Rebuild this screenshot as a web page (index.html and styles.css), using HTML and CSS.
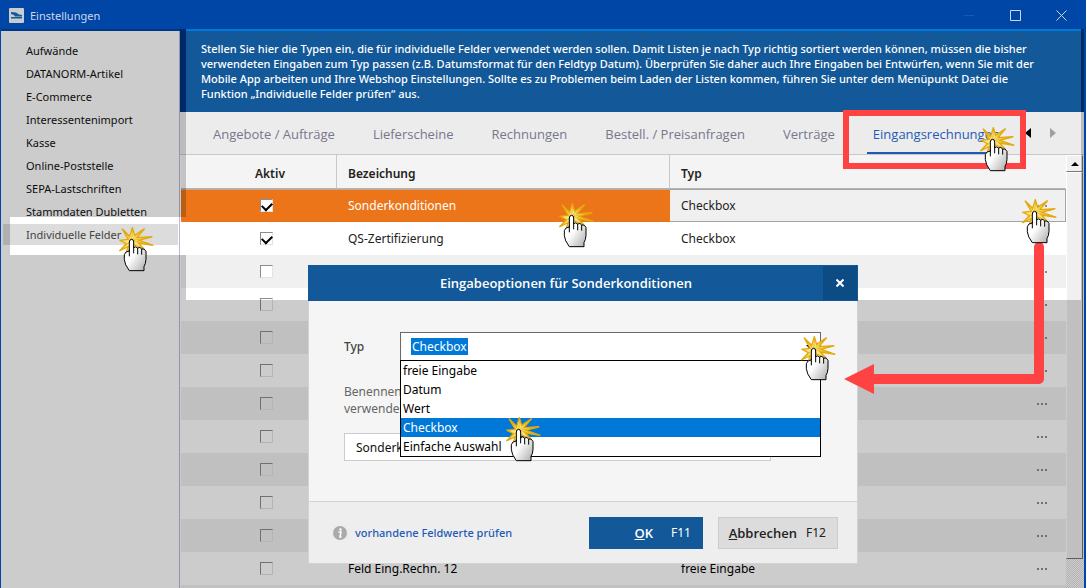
FILE: index.html
```html
<!DOCTYPE html>
<html lang="de">
<head>
<meta charset="utf-8">
<title>Einstellungen</title>
<link rel="stylesheet" href="styles.css">
</head>
<body>
<svg class="defs" aria-hidden="true">
  <defs>
    <linearGradient id="palm" x1="0" y1="0" x2="1" y2="1">
      <stop offset=".45" stop-color="#fff"/><stop offset="1" stop-color="#aaa"/>
    </linearGradient>
    <symbol id="click" viewBox="0 0 108 135">
      <path d="M9 5 L32 28 L40 2 L47 25 L77 5 L54 32 L100 29 L60 40 L103 55 L58 48 L75 66 L46 54 L20 84 L27 59 L1 72 L22 50 L3 40 L28 37 Z" fill="#f9e27c" stroke="#e3a90a" stroke-width="4"/>
      <path d="M38 40 L12 8 M38 40 L41 5 M38 40 L74 8 M38 40 L98 31 M38 40 L101 54 M38 40 L4 70" stroke="#e3a90a" stroke-width="2" fill="none"/>
      <path d="M31 72 V45 Q31 37 38 37 Q44 37 44 45 V62 Q50 57 56 63 Q63 58 68 66 Q76 63 81 73 V97 Q80 112 75 118 V131 H31 Q17 113 16 98 V83 Q18 73 31 72 Z" fill="url(#palm)" stroke="#000" stroke-width="3" stroke-linejoin="round"/>
      <path d="M31 68 V88 M44 58 V79 M56 63 V82 M68 66 V83" stroke="#000" stroke-width="3" fill="none"/>
    </symbol>
    <symbol id="dots" viewBox="0 0 11 2">
      <path d="M0 0h2v2H0zM4 0h2v2H4zM8 0h2v2H8z" fill="#8c8c8c"/>
    </symbol>
  </defs>
</svg>
<div class="window">
  <header class="titlebar">
    <svg class="app-icon" viewBox="0 0 15 15"><rect width="15" height="15" rx="1" fill="#c9cdd2"/><path d="M2 4L7 4.500L10 6.500L13 7V8.500H6L5 7L2 6Z" fill="#135898"/><path d="M2 9H13V10.500H2Z" fill="#135898"/></svg>
    <h1 class="app-title">Einstellungen</h1>
    <div class="window-buttons">
      <button class="window-button" aria-label="Minimieren"><svg viewBox="0 0 11 11"><path d="M0 5.500H10" stroke="#0e5fb0"/></svg></button>
      <button class="window-button" aria-label="Maximieren"><svg viewBox="0 0 11 11"><path d="M.5.5h10v10H.5z" fill="none" stroke="#ccd8ea"/></svg></button>
      <button class="window-button" aria-label="Schließen"><svg viewBox="0 0 11 11"><path d="M.5.500l10 10M10.500.500l-10 10" stroke="#ccd8ea"/></svg></button>
    </div>
  </header>
  <div class="content">
    <nav class="sidebar">
      <a class="nav-item" href="#">Aufwände</a>
      <a class="nav-item" href="#">DATANORM-Artikel</a>
      <a class="nav-item" href="#">E-Commerce</a>
      <a class="nav-item" href="#">Interessentenimport</a>
      <a class="nav-item" href="#">Kasse</a>
      <a class="nav-item" href="#">Online-Poststelle</a>
      <a class="nav-item" href="#">SEPA-Lastschriften</a>
      <a class="nav-item" href="#">Stammdaten Dubletten</a>
      <a class="nav-item nav-current" href="#">Individuelle Felder</a>
    </nav>
    <main class="main">
      <p class="banner">Stellen Sie hier die Typen ein, die für individuelle Felder verwendet werden sollen. Damit Listen je nach Typ richtig sortiert werden können, müssen die bisher<br>verwendeten Eingaben zum Typ passen (z.B. Datumsformat für den Feldtyp Datum). Überprüfen Sie daher auch Ihre Eingaben bei Entwürfen, wenn Sie mit der<br>Mobile App arbeiten und Ihre Webshop Einstellungen. Sollte es zu Problemen beim Laden der Listen kommen, führen Sie unter dem Menüpunkt Datei die<br>Funktion „Individuelle Felder prüfen“ aus.</p>
      <div class="tabs">
        <button class="tab">Angebote / Aufträge</button>
        <button class="tab">Lieferscheine</button>
        <button class="tab">Rechnungen</button>
        <button class="tab">Bestell. / Preisanfragen</button>
        <button class="tab">Verträge</button>
        <button class="tab tab-active">Eingangsrechnungen</button>
        <div class="tab-scroll">
          <button class="tab-arrow" aria-label="Zurück"><svg viewBox="0 0 6 10"><path d="M6 0V10L0 5Z" fill="#000"/></svg></button>
          <button class="tab-arrow" aria-label="Weiter"><svg viewBox="0 0 6 10"><path d="M0 0V10L6 5Z" fill="#a0a0a0"/></svg></button>
        </div>
      </div>
      <div class="grid-area">
        <table class="grid">
          <colgroup><col class="col-active"><col class="col-name"><col></colgroup>
          <thead><tr><th class="cell-active">Aktiv</th><th>Bezeichung</th><th>Typ</th></tr></thead>
          <tbody>
            <tr class="selected"><td class="cell-active"><input type="checkbox" checked aria-label="Aktiv"></td><td>Sonderkonditionen</td><td class="cell-type"><div class="type-box">Checkbox<button class="more" aria-label="Optionen"><svg><use href="#dots"/></svg></button></div></td></tr>
            <tr><td class="cell-active"><input type="checkbox" checked aria-label="Aktiv"></td><td>QS-Zertifizierung</td><td class="cell-type"><div class="type-box">Checkbox</div></td></tr>
            <tr><td class="cell-active"><input type="checkbox" aria-label="Aktiv"></td><td></td><td class="cell-type"><div class="type-box"><button class="more" aria-label="Optionen"><svg><use href="#dots"/></svg></button></div></td></tr>
            <tr><td class="cell-active"><input type="checkbox" disabled aria-label="Aktiv"></td><td></td><td class="cell-type"><div class="type-box"><button class="more" aria-label="Optionen"><svg><use href="#dots"/></svg></button></div></td></tr>
            <tr><td class="cell-active"><input type="checkbox" disabled aria-label="Aktiv"></td><td></td><td class="cell-type"><div class="type-box"><button class="more" aria-label="Optionen"><svg><use href="#dots"/></svg></button></div></td></tr>
            <tr><td class="cell-active"><input type="checkbox" disabled aria-label="Aktiv"></td><td></td><td class="cell-type"><div class="type-box"><button class="more" aria-label="Optionen"><svg><use href="#dots"/></svg></button></div></td></tr>
            <tr><td class="cell-active"><input type="checkbox" disabled aria-label="Aktiv"></td><td></td><td class="cell-type"><div class="type-box"><button class="more" aria-label="Optionen"><svg><use href="#dots"/></svg></button></div></td></tr>
            <tr><td class="cell-active"><input type="checkbox" disabled aria-label="Aktiv"></td><td></td><td class="cell-type"><div class="type-box"><button class="more" aria-label="Optionen"><svg><use href="#dots"/></svg></button></div></td></tr>
            <tr><td class="cell-active"><input type="checkbox" disabled aria-label="Aktiv"></td><td></td><td class="cell-type"><div class="type-box"><button class="more" aria-label="Optionen"><svg><use href="#dots"/></svg></button></div></td></tr>
            <tr><td class="cell-active"><input type="checkbox" disabled aria-label="Aktiv"></td><td></td><td class="cell-type"><div class="type-box"><button class="more" aria-label="Optionen"><svg><use href="#dots"/></svg></button></div></td></tr>
            <tr><td class="cell-active"><input type="checkbox" disabled aria-label="Aktiv"></td><td></td><td class="cell-type"><div class="type-box"><button class="more" aria-label="Optionen"><svg><use href="#dots"/></svg></button></div></td></tr>
            <tr><td class="cell-active"><input type="checkbox" disabled aria-label="Aktiv"></td><td>Feld Eing.Rechn. 12</td><td class="cell-type"><div class="type-box">freie Eingabe<button class="more" aria-label="Optionen"><svg><use href="#dots"/></svg></button></div></td></tr>
            <tr><td></td><td></td><td></td></tr>
          </tbody>
        </table>
        <div class="scrollbar">
          <button class="scroll-up" aria-label="Nach oben"><svg viewBox="0 0 8 4"><path d="M4 0L8 4H0Z"/></svg></button>
          <div class="scroll-thumb"></div>
        </div>
      </div>
    </main>
    <div class="dim"></div>
  </div>

  <section class="dialog" role="dialog" aria-labelledby="dialog-title">
    <header class="dialog-header">
      <h2 class="dialog-title" id="dialog-title">Eingabeoptionen für Sonderkonditionen</h2>
      <button class="dialog-close" aria-label="Schließen"><svg viewBox="0 0 8 8"><path d="M.5.500l7 7M7.500.500l-7 7" stroke="#fff" stroke-width="2"/></svg></button>
    </header>
    <div class="dialog-body">
      <div class="field">
        <label class="field-label" for="type">Typ</label>
        <div class="combo">
          <select class="combo-value" id="type"><option>Checkbox</option></select>
          <svg class="combo-arrow" viewBox="0 0 8 4"><path d="M0 0H8L4 4Z"/></svg>
          <ul class="options" role="listbox" aria-label="Typ">
            <li class="option" role="option">freie Eingabe</li>
            <li class="option" role="option">Datum</li>
            <li class="option" role="option">Wert</li>
            <li class="option option-active" role="option" aria-selected="true">Checkbox</li>
            <li class="option" role="option">Einfache Auswahl</li>
          </ul>
        </div>
      </div>
      <label class="hint" for="name">Benennen<br>verwende</label>
      <input class="name-input" id="name" type="text" value="Sonderkonditionen">
    </div>
    <footer class="dialog-footer">
      <svg class="info" viewBox="0 0 14 14"><circle cx="7" cy="7" r="7" fill="#aaa"/><circle cx="7.500" cy="3.500" r="1.200" fill="#fff"/><path d="M5.500 6H8L7 11H8.500" fill="none" stroke="#fff" stroke-width="1.500"/></svg>
      <a class="check-link" href="#">vorhandene Feldwerte prüfen</a>
      <button class="action action-ok"><b><u>O</u>K</b><span>F11</span></button>
      <button class="action action-cancel"><b><u>A</u>bbrechen</b><span>F12</span></button>
    </footer>
  </section>

  <div class="highlight"></div>
  <svg class="arrow" viewBox="0 0 202 154"><path d="M195 6V138H28" fill="none" stroke="#ff4343" stroke-width="10" stroke-linecap="round" stroke-linejoin="round"/><path d="M0 138L30 123V153Z" fill="#ff4343"/></svg>
  <svg class="click click-nav"><use href="#click"/></svg>
  <svg class="click click-row"><use href="#click"/></svg>
  <svg class="click click-tab"><use href="#click"/></svg>
  <svg class="click click-more"><use href="#click"/></svg>
  <svg class="click click-combo"><use href="#click"/></svg>
  <svg class="click click-option"><use href="#click"/></svg>
</div>
</body>
</html>
```

FILE: styles.css
```css
* { box-sizing: border-box; }
body {
  margin: 0;
  font-family: "Noto Sans", "Open Sans", sans-serif;
  font-size: 11px;
  color: #222;
}
button { border: 0; padding: 0; background: none; font: inherit; color: inherit; }
h1, h2, p, ul { margin: 0; padding: 0; }
svg { display: block; }
.defs { position: absolute; width: 0; height: 0; }

.window {
  position: relative;
  display: flex;
  flex-direction: column;
  height: 100vh;
  overflow: hidden;
  padding: 0 2px 0 1px;
  background: #0046a6;
}
.titlebar { display: flex; align-items: center; height: 29px; flex: none; padding: 1px 0 0 8px; gap: 6px; }
.app-icon { width: 15px; height: 15px; }
.app-title { flex: 1; font-size: 11px; font-weight: 400; color: #ccd8ea; }
.window-buttons { display: flex; }
.window-button { display: grid; place-items: center; width: 46px; height: 28px; }
.window-button svg { width: 11px; height: 11px; }

.content { position: relative; display: flex; flex: 1; min-height: 0; }
.sidebar {
  flex: none;
  width: 179px;
  margin-top: 2px;
  padding: 9px 1px 0 1px;
  background: #fff;
  border-right: 1px solid #b9b9dc;
}
.nav-item {
  display: block;
  height: 21px;
  margin: 0 0 2px 1px;
  padding-left: 23px;
  line-height: 21px;
  color: #111;
  text-decoration: none;
}
.nav-current { background: #dcdcdc; color: #444; }

.main { display: flex; flex-direction: column; flex: 1; min-width: 0; background: #fff; }
.banner {
  height: 83px;
  flex: none;
  padding: 12px 0 0 15px;
  border: solid #003483;
  border-width: 0 3px 0 6px;
  background: #135898;
  box-shadow: inset 0 2px #0078d7;
  color: #fff;
  font-weight: 500;
  line-height: 15px;
  white-space: nowrap;
}
.tabs {
  display: flex;
  flex: none;
  height: 43px;
  padding-left: 33px;
  border-bottom: 1px solid #c8c8c8;
  background: #ececec;
}
.tab { margin-right: 38px; padding-top: 1px; font-family: "Open Sans", sans-serif; font-size: 13px; font-weight: 500; color: #77778c; white-space: nowrap; }
.tab-active { margin: 0 0 0 -6px; padding: 1px 6px 0; color: #1f5bb5; box-shadow: inset 0 -2px #1f5bb5; }
.tab-scroll { display: flex; gap: 19px; align-items: center; margin-left: auto; padding-right: 28px; }
.tab-arrow svg { width: 6px; height: 10px; }

.grid-area { display: flex; flex: 1; min-height: 0; padding-left: 1px; }
.grid { flex: 1; border-collapse: separate; border-spacing: 0; table-layout: fixed; font-size: 12px; }
.col-active { width: 156px; }
.col-name { width: 333px; }
.grid th {
  height: 34px;
  padding: 3px 0 0 11px;
  background: #f4f4f4;
  border-right: 1px solid #c8c8c8;
  border-bottom: 1px solid #b4b4b4;
  font-size: 12px;
  font-weight: 600;
  text-align: left;
}
.grid th:last-child { border-right-color: #f4f4f4; }
.grid td { height: 33px; padding: 0 0 0 11px; }
.grid .cell-active { padding-left: 79px; }
.grid th.cell-active { padding-left: 74px; }
.grid .cell-type { padding: 0; }
.grid tbody tr:nth-child(odd) { background: #f0f0f0; }
.grid tbody tr:nth-child(n+4) { color: #000; }
.grid .selected td { background: #ec751a; color: #fff; box-shadow: inset 0 1px #c0a898; }
.grid .selected .cell-type { background: #f0f0f0; color: #222; box-shadow: none; }
.type-box { display: flex; align-items: center; height: 33px; padding: 0 18px 0 11px; }
.selected .type-box { padding-right: 17px; border: solid #a5a5a5; border-width: 1px 1px 1px 0; }
.more { margin-left: auto; }
.more svg { width: 11px; height: 2px; }
.grid input {
  display: block;
  width: 13px;
  height: 13px;
  margin: 0;
  appearance: none;
  border: 1px solid;
  border-color: #8c8c8c #e3e3e3 #e3e3e3 #8c8c8c;
  background: #fff;
}
.grid input:disabled { background: transparent; }
.grid input:checked::before {
  content: "";
  display: block;
  width: 8px;
  height: 5px;
  margin: 2px 1px;
  border: solid #000;
  border-width: 0 0 2px 2px;
  transform: rotate(-45deg);
}
.scrollbar {
  display: flex;
  flex-direction: column;
  width: 18px;
  flex: none;
  padding: 0 1px 29px 0;
  background: repeating-conic-gradient(#fff 0 25%, #e0e0e0 0 50%) 0 0 / 2px 2px;
}
.scroll-up, .scroll-thumb { background: #f0f0f0; border: 1px solid #fff; border-right-color: #777; border-bottom-color: #777; }
.scroll-up { display: grid; place-items: center; height: 17px; }
.scroll-up svg { width: 8px; height: 4px; }
.scroll-thumb { flex: 1; }

.dim {
  position: absolute;
  inset: 0;
  background: rgba(0, 0, 0, .2);
  clip-path: polygon(evenodd, 0 0, 100% 0, 100% 100%, 0 100%, 0 0,
    185px 0, calc(100% - 3px) 0, calc(100% - 3px) 271px, 185px 271px, 185px 226px, 9px 226px, 9px 188px, 185px 188px, 185px 0);
  pointer-events: none;
}

.dialog { position: absolute; left: 308px; top: 265px; width: 550px; background: #f5f5f5; }
.dialog-header { display: flex; height: 36px; padding: 1px 1px 1px 35px; background: #135898; color: #fff; }
.dialog-title { flex: 1; padding-right: 34px; font-family: "Open Sans", sans-serif; font-size: 13px; font-weight: 600; line-height: 34px; text-align: center; }
.dialog-close { display: grid; place-items: center; width: 34px; background: #0c4b84; }
.dialog-close svg { width: 8px; height: 8px; }
.dialog-body { height: 201px; padding: 31px 36px 0 35px; border: solid #d2d2d2; border-width: 0 1px 1px; font-size: 12px; }
.field { display: flex; align-items: center; }
.field-label { flex: 1; font-weight: 500; color: #444; }
.combo { position: relative; display: flex; align-items: center; width: 421px; height: 29px; padding: 0 6px 0 10px; border: 1px solid #696969; background: #fff; }
.combo-value { height: 17px; padding: 0 1px; border: 0; appearance: none; background: #0078d7; color: #fff; font: inherit; line-height: 17px; }
.combo-arrow { width: 8px; height: 4px; margin-left: auto; }
.options { position: absolute; left: -1px; right: -1px; top: 27px; border: 1px solid #000; background: #fff; color: #000; list-style: none; }
.option { height: 19px; padding-left: 2px; line-height: 20px; }
.option-active { background: #0078d7; color: #fff; }
.hint { display: block; margin: 22px 0 16px; font-size: 12px; line-height: 17px; color: #666; }
.name-input { display: block; width: 427px; height: 28px; padding: 0 11px; border: 1px solid #ccc; background: #fff; font: inherit; color: #111; }
.dialog-footer { display: flex; align-items: center; height: 62px; padding: 0 19px 0 24px; border: solid #d2d2d2; border-width: 0 1px 1px; background: #eee; }
.info { width: 14px; height: 14px; }
.check-link { flex: 1; margin-left: 8px; font-weight: 500; color: #1f5bb5; text-decoration: none; }
.action { display: flex; align-items: center; justify-content: flex-end; height: 32px; padding-right: 12px; font-size: 12px; }
.action b { font-family: "Open Sans", sans-serif; font-size: 13px; font-weight: 600; }
.action-ok { gap: 18px; width: 114px; background: #135898; color: #fff; }
.action-cancel { gap: 9px; width: 120px; margin-left: 15px; border: 1px solid #ccc; background: #dcdcdc; padding-right: 11px; }

.highlight { position: absolute; left: 843px; top: 110px; width: 183px; height: 59px; border: 6px solid #ff4343; }
.arrow { position: absolute; left: 844px; top: 241px; width: 202px; height: 154px; }
.click { position: absolute; width: 36px; height: 45px; }
.click-nav { left: 119px; top: 227px; }
.click-row { left: 559px; top: 203px; }
.click-tab { left: 980px; top: 127px; }
.click-more { left: 1022px; top: 199px; }
.click-combo { left: 801px; top: 336px; }
.click-option { left: 506px; top: 417px; }
```
